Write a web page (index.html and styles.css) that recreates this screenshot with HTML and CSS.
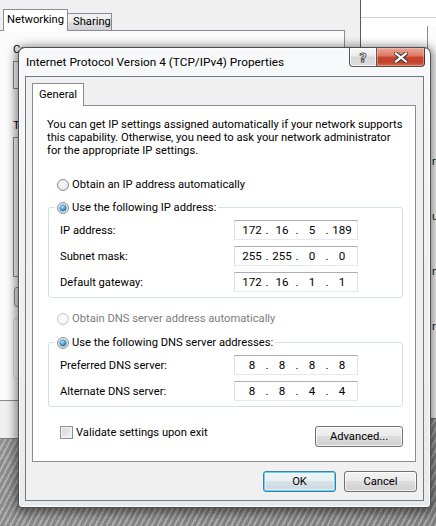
FILE: index.html
```html
<!DOCTYPE html>
<html>
<head>
<meta charset="utf-8">
<title>Internet Protocol Version 4 (TCP/IPv4) Properties</title>
<link rel="stylesheet" href="styles.css">
</head>
<body>
<div class="desk">
  <div class="win-b">
    <div class="b-rule"></div>
    <div class="b-body">
      <span class="frag">r</span>
      <span class="frag">u</span>
      <span class="frag">n</span>
      <span class="frag">ro</span>
    </div>
  </div>

  <div class="win-a">
    <div class="a-tabs">
      <span class="a-tab sel">Networking</span>
      <span class="a-tab">Sharing</span>
    </div>
    <div class="a-panel">
      <div class="a-label">Connect using:</div>
      <div class="a-box a-list1"></div>
      <div class="a-label a-gap">This connection uses the following items:</div>
      <div class="a-box a-list2"></div>
      <div class="a-btnrow"><span class="a-btn"></span></div>
      <div class="a-desc"></div>
    </div>
  </div>

  <div class="dlg">
    <div class="titlebar">
      <span class="title">Internet Protocol Version 4 (TCP/IPv4) Properties</span>
      <div class="caps">
        <span class="cap help">?</span>
        <span class="cap close">
          <svg width="14" height="11" viewBox="0 0 14 11">
            <path d="M2 1.5 L12 9.5 M12 1.5 L2 9.5" stroke="#3a3a3a" stroke-width="4.2" stroke-linecap="square" fill="none"/>
            <path d="M2 1.5 L12 9.5 M12 1.5 L2 9.5" stroke="#ffffff" stroke-width="2.2" stroke-linecap="square" fill="none"/>
          </svg>
        </span>
      </div>
    </div>
    <div class="client">
      <div class="tabs"><span class="tab">General</span></div>
      <div class="panel">
        <p class="intro">You can get IP settings assigned automatically if your network supports<br>this capability. Otherwise, you need to ask your network administrator<br>for the appropriate IP settings.</p>

        <div class="opt first"><span class="radio"></span><span>Obtain an IP address automatically</span></div>

        <fieldset class="grp">
          <legend><span class="radio on"></span><span>Use the following IP address:</span></legend>
          <div class="rows">
            <span class="lbl">IP address:</span>
            <span class="ip"><i>172</i><b>.</b><i>16</i><b>.</b><i>5</i><b>.</b><i>189</i></span>
            <span class="lbl">Subnet mask:</span>
            <span class="ip"><i>255</i><b>.</b><i>255</i><b>.</b><i>0</i><b>.</b><i>0</i></span>
            <span class="lbl">Default gateway:</span>
            <span class="ip"><i>172</i><b>.</b><i>16</i><b>.</b><i>1</i><b>.</b><i>1</i></span>
          </div>
        </fieldset>

        <div class="opt second disabled"><span class="radio"></span><span>Obtain DNS server address automatically</span></div>

        <fieldset class="grp grp2">
          <legend><span class="radio on"></span><span>Use the following DNS server addresses:</span></legend>
          <div class="rows">
            <span class="lbl">Preferred DNS server:</span>
            <span class="ip"><i>8</i><b>.</b><i>8</i><b>.</b><i>8</i><b>.</b><i>8</i></span>
            <span class="lbl">Alternate DNS server:</span>
            <span class="ip"><i>8</i><b>.</b><i>8</i><b>.</b><i>4</i><b>.</b><i>4</i></span>
          </div>
        </fieldset>

        <div class="bottomrow">
          <div class="chk"><span class="box"></span><span>Validate settings upon exit</span></div>
          <span class="btn adv">Advanced...</span>
        </div>
      </div>
      <div class="btns">
        <span class="btn ok">OK</span>
        <span class="btn">Cancel</span>
      </div>
    </div>
  </div>
</div>
</body>
</html>
```

FILE: styles.css
```css
* { box-sizing: border-box; }
html, body { margin: 0; padding: 0; }
body {
  width: 436px;
  height: 526px;
  overflow: hidden;
  font-family: Roboto, "Noto Sans", "Segoe UI", sans-serif;
  font-size: 11.2px;
  line-height: 15px;
  color: #000;
}
.desk {
  position: relative;
  width: 436px;
  height: 526px;
  overflow: hidden;
  background:
    repeating-linear-gradient(118deg, rgba(255,255,255,0.22) 0 2px, rgba(0,0,0,0.10) 2px 5px),
    linear-gradient(165deg, #d4d4d4 0%, #a9a9a9 50%, #8c8c8c 100%);
}

/* ---------- background window B (right) ---------- */
.win-b {
  position: absolute;
  left: 360px;
  top: 0;
  width: 76px;
  height: 419px;
  background: #ffffff;
  border-bottom: 1px solid #6f6f6f;
  overflow: hidden;
}
.b-rule { height: 18px; border-bottom: 1px solid #cfcfcf; }
.b-body {
  margin: 8px 0 0 67px;
  height: 392px;
  border-left: 1px solid #8a8a8a;
  background: #fbfbfb;
  display: flex;
  flex-direction: column;
  padding: 129px 0 0 4px;
  gap: 41px;
  overflow: hidden;
}
.frag { font-size: 11.2px; line-height: 14px; color: #222; }

/* ---------- background window A (left) ---------- */
.win-a {
  position: absolute;
  left: 0;
  top: 0;
  width: 361px;
  height: 439px;
  background: #f0f0f0;
  border-right: 1px solid #5c5c5c;
  border-bottom: 1px solid #7a7a7a;
}
.a-tabs {
  display: flex;
  align-items: flex-end;
  height: 30px;
  padding-left: 3px;
}
.a-tab {
  height: 17px;
  width: 44px;
  border: 1px solid #898c95;
  border-bottom: 0;
  border-left: 0;
  background: linear-gradient(#f3f3f3, #ebebeb 50%, #dedede 50%, #d2d2d2);
  padding-left: 5px;
  line-height: 15px;
}
.a-tab.sel {
  height: 22px;
  width: 65px;
  border-left: 1px solid #898c95;
  background: #fff;
  margin-bottom: -1px;
  position: relative;
  z-index: 1;
  padding: 2px 0 0 3px;
}
.a-panel {
  margin-left: -1px;
  width: 346px;
  height: 371px;
  border: 1px solid #898c95;
  background: #fbfbfb;
  padding: 11px 0 0 13px;
}
.a-label {
  width: 10px;
  overflow: hidden;
  white-space: nowrap;
  line-height: 15px;
  color: #000;
}
.a-gap { margin-top: 29px; }
.a-box { border: 1px solid #828790; background: #fff; width: 322px; margin-top: 4px; }
.a-list1 { height: 28px; }
.a-list2 { height: 140px; }
.a-btnrow { margin-top: 10px; height: 20px; padding-left: 1px; }
.a-btn { display: block; width: 80px; height: 20px; border: 1px solid #8a8a8a; border-radius: 3px; background: #ececec; }
.a-desc { margin-top: 11px; width: 322px; height: 61px; border: 1px solid #d5dfe5; border-radius: 3px; }

/* ---------- dialog ---------- */
.dlg {
  position: absolute;
  left: 18px;
  top: 47px;
  width: 413px;
  height: 461px;
  display: flex;
  flex-direction: column;
  border: 1px solid rgba(50, 50, 50, 0.85);
  border-radius: 7px 7px 4px 4px;
  background: linear-gradient(#f8f9fa, #eef0f1 40%, #e8eaec);
  box-shadow: inset 0 0 0 1px rgba(255,255,255,0.85), 0 2px 10px 3px rgba(0,0,0,0.45);
}
.titlebar {
  display: flex;
  align-items: flex-start;
  height: 28px;
  padding-left: 7px;
}
.title {
  margin-top: 7px;
  font-size: 11.8px;
  line-height: 15px;
  white-space: nowrap;
}
.caps {
  margin-left: auto;
  margin-right: 5px;
  display: flex;
}
.cap {
  height: 19px;
  display: flex;
  align-items: center;
  justify-content: center;
  border: 1px solid rgba(40,40,40,0.75);
  border-top: 0;
}
.help {
  width: 28px;
  border-radius: 0 0 0 4px;
  background: linear-gradient(#fbfbfb, #eaeaea 45%, #d6d6d6 50%, #dedede);
  font-family: "DejaVu Sans", sans-serif;
  font-weight: bold;
  font-size: 13px;
  color: #fff;
  -webkit-text-stroke: 1px #555;
  box-shadow: inset 0 0 0 1px rgba(255,255,255,0.7);
}
.close {
  width: 48px;
  border-left: 0;
  border-radius: 0 0 4px 0;
  background: linear-gradient(#eaa99a, #dc7763 45%, #c8442c 50%, #c2432c 80%, #d66f58);
  box-shadow: inset 0 0 0 1px rgba(255,200,190,0.45);
}
.client {
  flex: 1;
  margin: 0 6px 6px 6px;
  border: 1px solid #6f7a86;
  background: #f0f0f0;
  padding: 6px 7px 0 6px;
  display: flex;
  flex-direction: column;
}
.tabs { display: flex; height: 22px; }
.tab {
  width: 52px;
  height: 23px;
  border: 1px solid #898c95;
  border-bottom: 0;
  background: #fff;
  position: relative;
  z-index: 1;
  padding: 3px 0 0 6px;
  line-height: 15px;
}
.panel {
  height: 357px;
  border: 1px solid #898c95;
  background: #fff;
  padding: 12px 12px 0 14px;
}
.intro { margin: 0; line-height: 13px; white-space: nowrap; }

.opt {
  display: flex;
  align-items: center;
  height: 13px;
  gap: 3px;
  padding-left: 10px;
}
.opt.first { margin-top: 21px; }
.opt.second { margin-top: 14px; }
.disabled { color: #7d7d7d; }

.radio {
  width: 12px;
  height: 12px;
  flex: none;
  border-radius: 50%;
  border: 1px solid #8e9092;
  background: radial-gradient(circle at 50% 40%, #ffffff 0%, #f4f4f4 35%, #d4d4d4 100%);
  position: relative;
}
.disabled .radio {
  border-color: #c4c6c8;
  background: radial-gradient(circle at 50% 40%, #ffffff 0%, #f0f0f0 100%);
}
.radio.on::after {
  content: "";
  position: absolute;
  left: 2px;
  top: 2px;
  width: 6px;
  height: 6px;
  border-radius: 50%;
  background: radial-gradient(circle at 40% 35%, #b8ecff 0%, #3c9fdb 45%, #0d4f8c 100%);
  box-shadow: 0 0 0 0.5px #2a5d8a;
}

.grp {
  margin: 10px 0 0 1px;
  border: 1px solid #d5dfe5;
  border-radius: 3px;
  padding: 6px 0 5px 11px;
}
.grp2 { margin-top: 11px; }
.grp legend {
  display: flex;
  align-items: center;
  gap: 3px;
  height: 13px;
  line-height: 13px;
  margin-left: -5px;
  padding: 0 2px;
}
.rows {
  display: grid;
  grid-template-columns: 174px 124px;
  grid-auto-rows: 20px;
  row-gap: 6px;
  align-items: center;
}
.ip {
  height: 20px;
  display: flex;
  align-items: center;
  padding-left: 6px;
  font-size: 11.6px;
  border: 1px solid #e2e3ea;
  border-top-color: #abadb3;
  border-bottom-color: #e3e9ef;
  border-left-color: #dbdfe6;
}
.ip i { font-style: normal; width: 22px; text-align: center; }
.ip b { font-weight: normal; width: 8px; text-align: center; }

.bottomrow {
  display: flex;
  align-items: flex-start;
  margin-top: 19px;
}
.chk {
  display: flex;
  align-items: center;
  gap: 3px;
  height: 13px;
  margin-left: 13px;
}
.box {
  width: 13px;
  height: 13px;
  border: 1px solid #8e8f8f;
  background: linear-gradient(135deg, #cfd2d6, #f6f6f6);
  box-shadow: inset 0 0 0 1px #f4f4f4;
}
.btn {
  display: flex;
  align-items: center;
  justify-content: center;
  height: 21px;
  border: 1px solid #707070;
  border-radius: 3px;
  background: linear-gradient(#f2f2f2, #ebebeb 48%, #dddddd 50%, #cfcfcf);
  box-shadow: inset 0 0 0 1px rgba(255,255,255,0.75);
  line-height: 15px;
}
.adv { margin-left: auto; width: 88px; }
.btns {
  display: flex;
  justify-content: flex-end;
  gap: 8px;
  margin-top: 9px;
  margin-right: -1px;
}
.btns .btn { width: 73px; }
.btn.ok {
  border-color: #3c7fb1;
  box-shadow: inset 0 0 0 1px #5fd2f6, inset 0 0 0 2px rgba(255,255,255,0.5);
  background: linear-gradient(#f1f5f8, #e8eef2 48%, #d8e2e9 50%, #cad6de);
}
```
